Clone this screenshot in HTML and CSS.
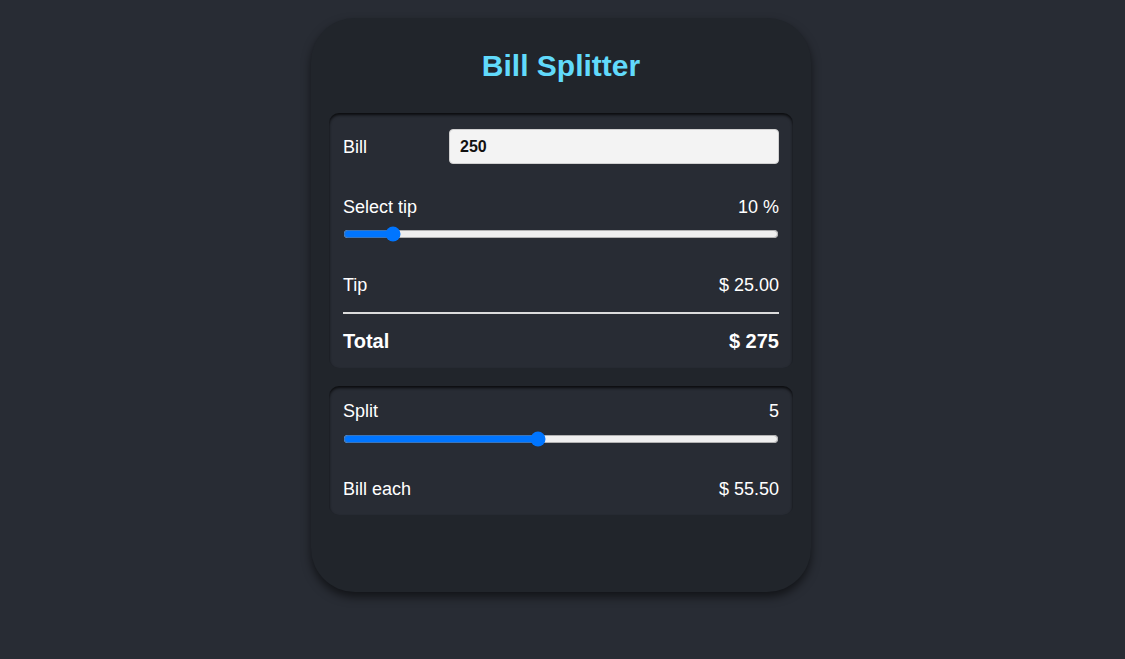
FILE: index.html
```html
<!DOCTYPE html>
<html lang="en">
<head>
<meta charset="utf-8">
<title>Bill Splitter</title>
<link rel="stylesheet" href="styles.css">
</head>
<body>
<main class="card">
  <h1 class="title">Bill Splitter</h1>
  <section class="panel panel-bill">
    <div class="row row-input">
      <label class="label" for="bill">Bill</label>
      <input id="bill" class="bill-input" type="text" value="250">
    </div>
    <div class="row row-top">
      <span class="label">Select tip</span>
      <span class="value">10 %</span>
    </div>
    <input class="slider" type="range" min="0" max="100" value="10">
    <div class="row row-tip">
      <span class="label">Tip</span>
      <span class="value">$ 25.00</span>
    </div>
    <hr class="divider">
    <div class="row row-total">
      <span class="label">Total</span>
      <span class="value">$ 275</span>
    </div>
  </section>
  <section class="panel panel-split">
    <div class="row row-split">
      <span class="label">Split</span>
      <span class="value">5</span>
    </div>
    <input class="slider" type="range" min="1" max="10" value="5">
    <div class="row row-each">
      <span class="label">Bill each</span>
      <span class="value">$ 55.50</span>
    </div>
  </section>
</main>
</body>
</html>
```

FILE: styles.css
```css
* { box-sizing: border-box; }

html, body {
  margin: 0;
  padding: 0;
  background: #282c34;
  font-family: "Liberation Sans", Arial, sans-serif;
  color: #ffffff;
}

body {
  display: flex;
  justify-content: center;
  align-items: flex-start;
  padding: 18px 3px 0 0;
  height: 659px;
  overflow: hidden;
}

.card {
  width: 500px;
  background: #21252b;
  border-radius: 44px;
  padding: 31px 18px 77px;
  box-shadow: 0 5px 10px rgba(0, 0, 0, 0.55);
  display: flex;
  flex-direction: column;
}

.title {
  margin: 0 0 30px;
  text-align: center;
  font-size: 30px;
  line-height: 34px;
  font-weight: bold;
  color: #61dafb;
}

.panel {
  background: #282c34;
  border-radius: 10px;
  box-shadow: inset 0 2px 3px rgba(0, 0, 0, 0.75);
  padding: 16px 14px 15px;
  display: flex;
  flex-direction: column;
}

.panel-split {
  margin-top: 18px;
  padding-top: 15px;
  padding-bottom: 15px;
}

.row {
  display: flex;
  justify-content: space-between;
  align-items: center;
  font-size: 18px;
  line-height: 21px;
}

.row-input {
  justify-content: flex-start;
}

.row-input .label {
  width: 106px;
  padding-top: 2px;
}

.bill-input {
  flex: 1;
  height: 35px;
  border: 1px solid #d0d0d0;
  border-radius: 4px;
  background: #f3f3f3;
  padding: 0 10px;
  font-family: "Liberation Sans", Arial, sans-serif;
  font-size: 16px;
  font-weight: bold;
  color: #111111;
}

.row-top { margin-top: 33px; }

.slider {
  width: 100%;
  margin: 8px 0 0;
  height: 16px;
  accent-color: #0075ff;
}

.panel-split .slider { margin-top: 9px; }

.row-tip { margin-top: 33px; }

.divider {
  margin: 16px 0 0;
  border: 0;
  height: 2px;
  background: #dcdcdc;
}

.row-total {
  margin-top: 16px;
  font-size: 20px;
  line-height: 23px;
  font-weight: bold;
}

.row-each { margin-top: 32px; }
```
